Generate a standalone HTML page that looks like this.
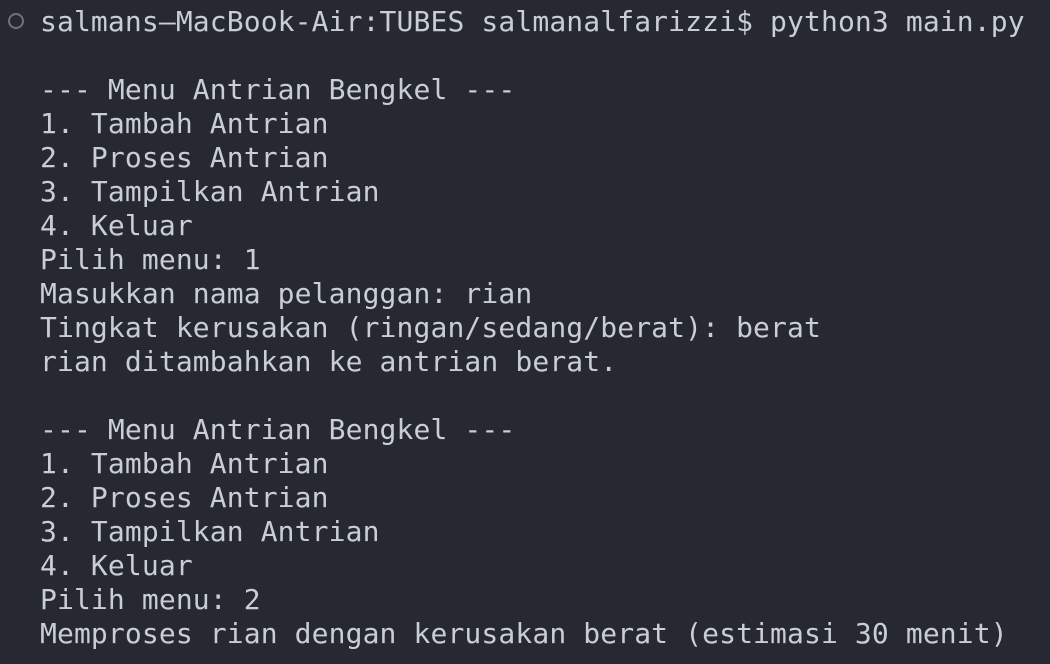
<!DOCTYPE html>
<html><head><meta charset="utf-8"><style>
html,body{margin:0;padding:0;background:#262932;width:1050px;height:664px;overflow:hidden}
pre{margin:0;position:absolute;left:40px;top:5px;font-family:"DejaVu Sans Mono","Liberation Mono",monospace;font-size:28px;line-height:34px;letter-spacing:0.12px;color:#c9cdd5}
.c{position:absolute;left:8px;top:13px;width:12px;height:12px;border:2.5px solid #6e727a;border-radius:50%}
</style></head><body>
<div class="c"></div>
<pre>salmans—MacBook-Air:TUBES salmanalfarizzi$ python3 main.py

--- Menu Antrian Bengkel ---
1. Tambah Antrian
2. Proses Antrian
3. Tampilkan Antrian
4. Keluar
Pilih menu: 1
Masukkan nama pelanggan: rian
Tingkat kerusakan (ringan/sedang/berat): berat
rian ditambahkan ke antrian berat.

--- Menu Antrian Bengkel ---
1. Tambah Antrian
2. Proses Antrian
3. Tampilkan Antrian
4. Keluar
Pilih menu: 2
Memproses rian dengan kerusakan berat (estimasi 30 menit)</pre>
</body></html>
